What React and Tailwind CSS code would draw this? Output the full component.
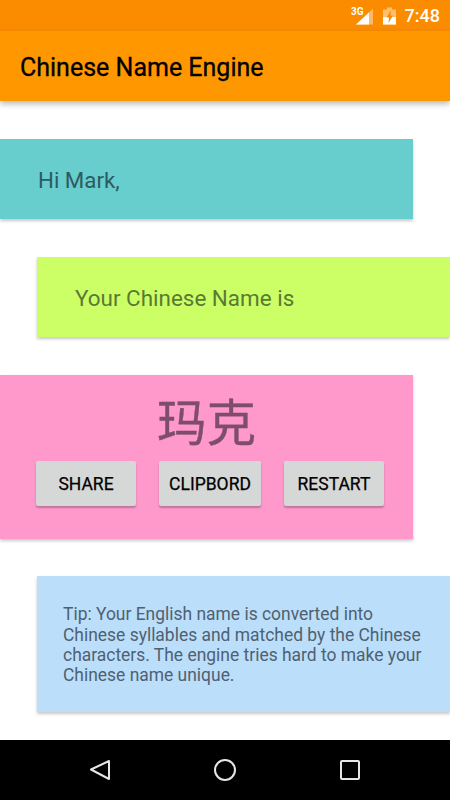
import React from "react";

const cardShadow = "shadow-[0_2px_3px_rgba(0,0,0,0.22)]";

const ActionButton = ({ label, width }) => (
  <button className={`${width} h-[45px] pt-[2px] flex items-center justify-center rounded-[2px] bg-[#d6d7d7] text-[17.5px] font-normal text-black [-webkit-text-stroke:0.25px_black] shadow-[0_2px_2px_rgba(0,0,0,0.25)]`}>
    {label}
  </button>
);

const StatusBar = () => (
  <div className="h-[31px] bg-[#fb8c00] flex items-center justify-end pr-[10px]">
    <svg width="22" height="20" viewBox="0 0 22 20" className="mr-[10px]">
      <polygon points="22,2.5 22,18.5 5,18.5" fill="#fff" opacity="0.4" />
      <polygon points="18,6.5 18,18.5 5,18.5" fill="#fff" />
      <text x="0" y="8.5" fontSize="10" fontWeight="700" fill="#fff" fontFamily="Roboto, sans-serif">3G</text>
    </svg>
    <svg width="13" height="22" viewBox="0 0 13 22" className="mr-[9px]">
      <path d="M4 2.5h5v2h4v15H0v-15h4z" fill="#fff" opacity="0.45" />
      <path d="M0 12h13v7.5H0z" fill="#fff" />
      <path d="M8 5L3.5 12.5h2.5L5.5 18l4.5-7.5H7.5z" fill="#fb8c00" />
    </svg>
    <span className="text-[18px] font-medium text-white">7:48</span>
  </div>
);

const NavBar = () => (
  <div className="h-[60px] bg-black flex items-center justify-between pl-[89px] pr-[89px]">
    <svg width="22" height="24" viewBox="0 0 22 24">
      <path d="M20 3v18L2 11.5z" fill="none" stroke="#e6e6e6" strokeWidth="2" strokeLinejoin="round" />
    </svg>
    <svg width="24" height="24" viewBox="0 0 24 24">
      <circle cx="12" cy="12" r="10" fill="none" stroke="#e6e6e6" strokeWidth="2" />
    </svg>
    <svg width="22" height="22" viewBox="0 0 22 22">
      <rect x="2" y="2" width="18" height="18" rx="1" fill="none" stroke="#e6e6e6" strokeWidth="2" />
    </svg>
  </div>
);

export default function App() {
  return (
    <div className="w-[450px] h-[800px] flex flex-col overflow-hidden bg-white font-['Roboto',sans-serif]">
      <StatusBar />

      <header className="relative z-10 h-[70px] pt-[3px] bg-[#ff9800] flex items-center pl-[20px] shadow-[0_3px_6px_rgba(0,0,0,0.28)]">
        <h1 className="text-[25px] font-normal text-black [-webkit-text-stroke:0.3px_black]">Chinese Name Engine</h1>
      </header>

      <main className="flex-1 flex flex-col pt-[38px]">
        <section className={`w-[413px] h-[80px] pt-[3px] flex items-center pl-[38px] bg-[#67cdcd] ${cardShadow}`}>
          <p className="text-[22.3px] text-[#2b5c5e]">Hi Mark,</p>
        </section>

        <section className={`mt-[38px] ml-[37px] h-[80px] pt-[3px] flex items-center pl-[38px] bg-[#ccff66] ${cardShadow}`}>
          <p className="text-[22.45px] text-[#5a7a33]">Your Chinese Name is</p>
        </section>

        <section className={`mt-[38px] w-[413px] h-[164px] flex flex-col bg-[#ff99cc] ${cardShadow}`}>
          <p className="mt-[16px] h-[58px] pl-[157px] text-[49.5px] leading-[58px] text-[#7f4d6c] [-webkit-text-stroke:0.4px_#7f4d6c] font-['Noto_Sans_CJK_SC',sans-serif]">玛克</p>
          <div className="mt-[12px] flex pl-[36px]">
            <ActionButton label="SHARE" width="w-[100px]" />
            <div className="ml-[23px]"><ActionButton label="CLIPBORD" width="w-[102px]" /></div>
            <div className="ml-[23px]"><ActionButton label="RESTART" width="w-[100px]" /></div>
          </div>
        </section>

        <section className={`mt-[37px] ml-[37px] h-[136px] pt-[2px] flex items-center pl-[26px] pr-[20px] bg-[#bbdefb] ${cardShadow}`}>
          <p className="text-[17.45px] leading-[20.3px] text-[#4f6170]">
            Tip: Your English name is converted into Chinese syllables and matched by the Chinese characters. The engine tries hard to make your Chinese name unique.
          </p>
        </section>
      </main>

      <NavBar />
    </div>
  );
}
